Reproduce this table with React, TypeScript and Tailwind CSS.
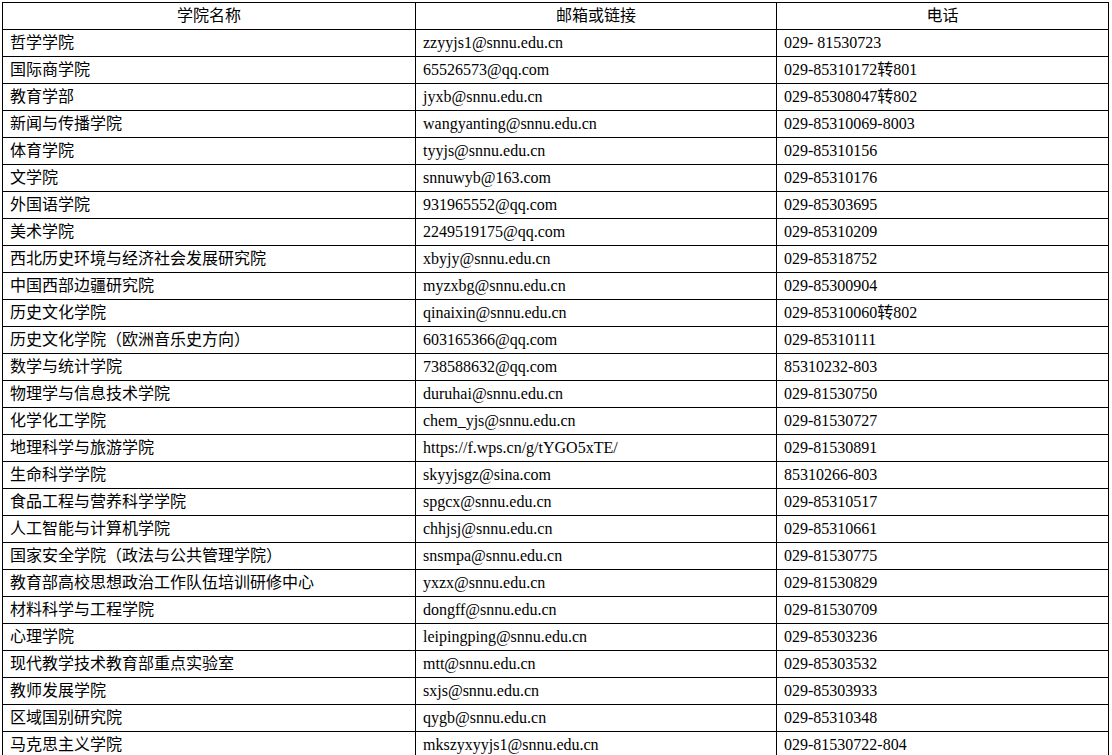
const rows: [string, string, string][] = [
  ["哲学学院", "zzyyjs1@snnu.edu.cn", "029- 81530723"],
  ["国际商学院", "65526573@qq.com", "029-85310172转801"],
  ["教育学部", "jyxb@snnu.edu.cn", "029-85308047转802"],
  ["新闻与传播学院", "wangyanting@snnu.edu.cn", "029-85310069-8003"],
  ["体育学院", "tyyjs@snnu.edu.cn", "029-85310156"],
  ["文学院", "snnuwyb@163.com", "029-85310176"],
  ["外国语学院", "931965552@qq.com", "029-85303695"],
  ["美术学院", "2249519175@qq.com", "029-85310209"],
  ["西北历史环境与经济社会发展研究院", "xbyjy@snnu.edu.cn", "029-85318752"],
  ["中国西部边疆研究院", "myzxbg@snnu.edu.cn", "029-85300904"],
  ["历史文化学院", "qinaixin@snnu.edu.cn", "029-85310060转802"],
  ["历史文化学院（欧洲音乐史方向）", "603165366@qq.com", "029-85310111"],
  ["数学与统计学院", "738588632@qq.com", "85310232-803"],
  ["物理学与信息技术学院", "duruhai@snnu.edu.cn", "029-81530750"],
  ["化学化工学院", "chem_yjs@snnu.edu.cn", "029-81530727"],
  ["地理科学与旅游学院", "https://f.wps.cn/g/tYGO5xTE/", "029-81530891"],
  ["生命科学学院", "skyyjsgz@sina.com", "85310266-803"],
  ["食品工程与营养科学学院", "spgcx@snnu.edu.cn", "029-85310517"],
  ["人工智能与计算机学院", "chhjsj@snnu.edu.cn", "029-85310661"],
  ["国家安全学院（政法与公共管理学院）", "snsmpa@snnu.edu.cn", "029-81530775"],
  ["教育部高校思想政治工作队伍培训研修中心", "yxzx@snnu.edu.cn", "029-81530829"],
  ["材料科学与工程学院", "dongff@snnu.edu.cn", "029-81530709"],
  ["心理学院", "leipingping@snnu.edu.cn", "029-85303236"],
  ["现代教学技术教育部重点实验室", "mtt@snnu.edu.cn", "029-85303532"],
  ["教师发展学院", "sxjs@snnu.edu.cn", "029-85303933"],
  ["区域国别研究院", "qygb@snnu.edu.cn", "029-85310348"],
  ["马克思主义学院", "mkszyxyyjs1@snnu.edu.cn", "029-81530722-804"],
];

const cell = "border border-black h-[26px] pt-0 pb-[1px] px-[7px] leading-[25px] whitespace-nowrap";

export default function App() {
  return (
    <div className="min-h-screen bg-white pl-[2px] pt-[2px] text-black">
      <table className="w-[1106px] table-fixed border-collapse font-['Liberation_Serif','Noto_Sans_CJK_SC',serif] text-[16px]">
        <colgroup>
          <col className="w-[413px]" />
          <col className="w-[361px]" />
          <col className="w-[332px]" />
        </colgroup>
        <thead>
          <tr>
            <th className={`${cell} text-center font-normal`}>学院名称</th>
            <th className={`${cell} text-center font-normal`}>邮箱或链接</th>
            <th className={`${cell} text-center font-normal`}>电话</th>
          </tr>
        </thead>
        <tbody>
          {rows.map(([name, mail, phone]) => (
            <tr key={name}>
              <td className={`${cell} text-left`}>{name}</td>
              <td className={`${cell} text-left`}>{mail}</td>
              <td className={`${cell} text-left`}>{phone}</td>
            </tr>
          ))}
        </tbody>
      </table>
    </div>
  );
}
